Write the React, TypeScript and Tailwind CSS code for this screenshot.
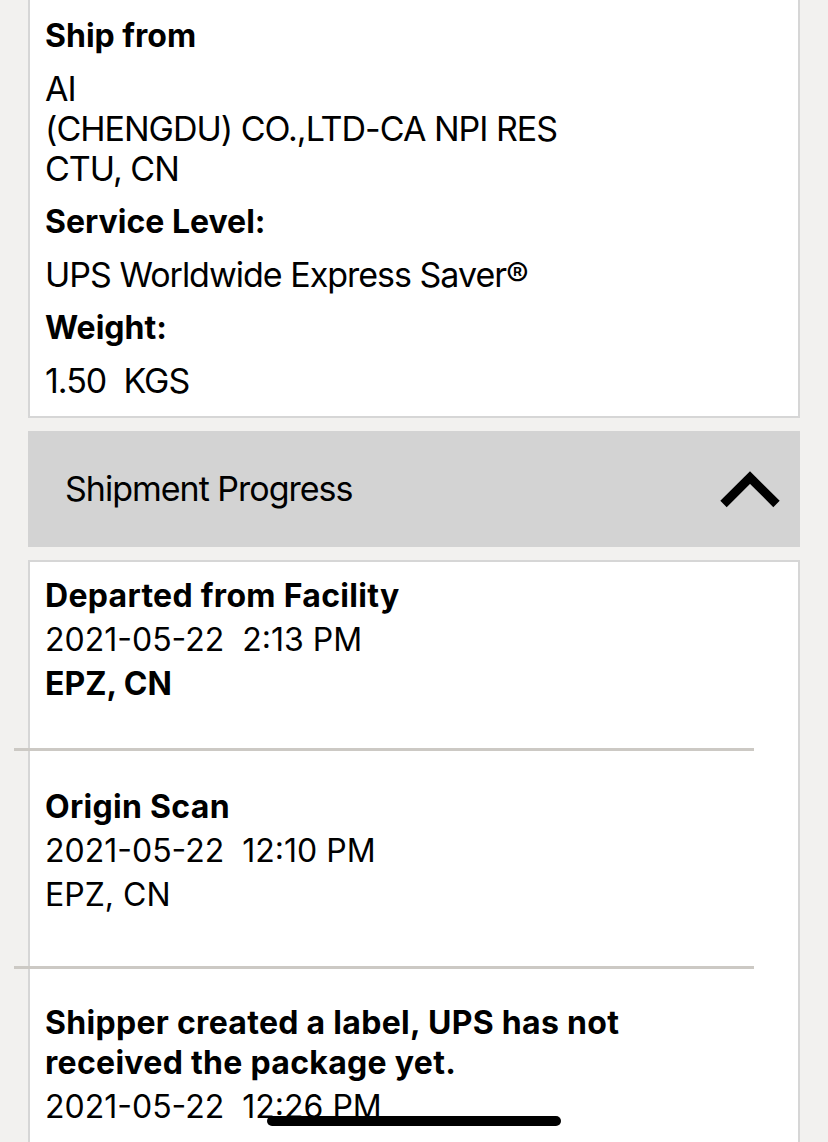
import React from 'react';

const SHIP_INFO = [
  { label: 'Ship from', lines: ['AI', '(CHENGDU) CO.,LTD-CA NPI RES', 'CTU, CN'] },
  { label: 'Service Level:', lines: ['UPS Worldwide Express Saver®'] },
  { label: 'Weight:', lines: ['1.50  KGS'] },
];

const ACTIVITY = [
  { title: 'Departed from Facility', date: '2021-05-22  2:13 PM', place: 'EPZ, CN', boldPlace: true, pad: 'pt-[14px] pb-[44px]' },
  { title: 'Origin Scan', date: '2021-05-22  12:10 PM', place: 'EPZ, CN', boldPlace: false, pad: 'pt-[36px] pb-[51px]' },
  { title: 'Shipper created a label, UPS has not received the package yet.', date: '2021-05-22  12:26 PM', place: '', boldPlace: false, pad: 'pt-[34px] pb-[40px]' },
];

const ChevronUp = () => (
  <svg width="68" height="46" viewBox="0 0 68 46" fill="none">
    <polyline points="7.5,38 34,11.5 60.5,38" stroke="#000" strokeWidth="9" strokeLinecap="butt" strokeLinejoin="miter" />
  </svg>
);

const App: React.FC = () => {
  return (
    <div className="relative h-[1142px] overflow-hidden bg-[#f2f1ef] text-black" style={{ fontFamily: 'Inter, "Noto Sans", sans-serif' }}>
      <div className="px-[28px] space-y-[13px]">
        {/* shipment details card, its top is scrolled away */}
        <div className="bg-white border-x-2 border-b-2 border-[#d6d6d6] pl-[15px] pt-[16px] pb-[15px] flex flex-col gap-[13px]">
          {SHIP_INFO.map(item => (
            <React.Fragment key={item.label}>
              <p className="text-[32px] font-bold leading-[40px]">{item.label}</p>
              <div>
                {item.lines.map(l => (
                  <p key={l} className="text-[34px] leading-[40px] tracking-[-1px] whitespace-pre">{l}</p>
                ))}
              </div>
            </React.Fragment>
          ))}
        </div>

        <button className="w-full h-[116px] bg-[#d3d3d3] flex items-center justify-between pl-[37px] pr-[16px]">
          <span className="text-[34px] leading-[40px] tracking-[-1px]">Shipment Progress</span>
          <ChevronUp />
        </button>

        <div className="bg-white border-2 border-[#d6d6d6] pl-[15px]">
          {ACTIVITY.map((a, i) => (
            <div key={a.title}>
              <div className={`${a.pad} pr-[130px] flex flex-col gap-[4px]`}>
                <p className="text-[32px] font-bold leading-[40px] tracking-[0.3px]">{a.title}</p>
                <p className="text-[32px] leading-[40px] whitespace-pre">{a.date}</p>
                {a.place && (
                  <p className={`text-[32px] leading-[40px] ${a.boldPlace ? 'font-bold' : ''}`}>{a.place}</p>
                )}
              </div>
              {i < ACTIVITY.length - 1 && <div className="-ml-[31px] w-[740px] h-[3px] bg-[#ccc9c4]" />}
            </div>
          ))}
        </div>
      </div>

      {/* home indicator */}
      <div className="absolute left-[267px] bottom-[16px] w-[294px] h-[10px] rounded-full bg-black" />
    </div>
  );
};

export default App;
